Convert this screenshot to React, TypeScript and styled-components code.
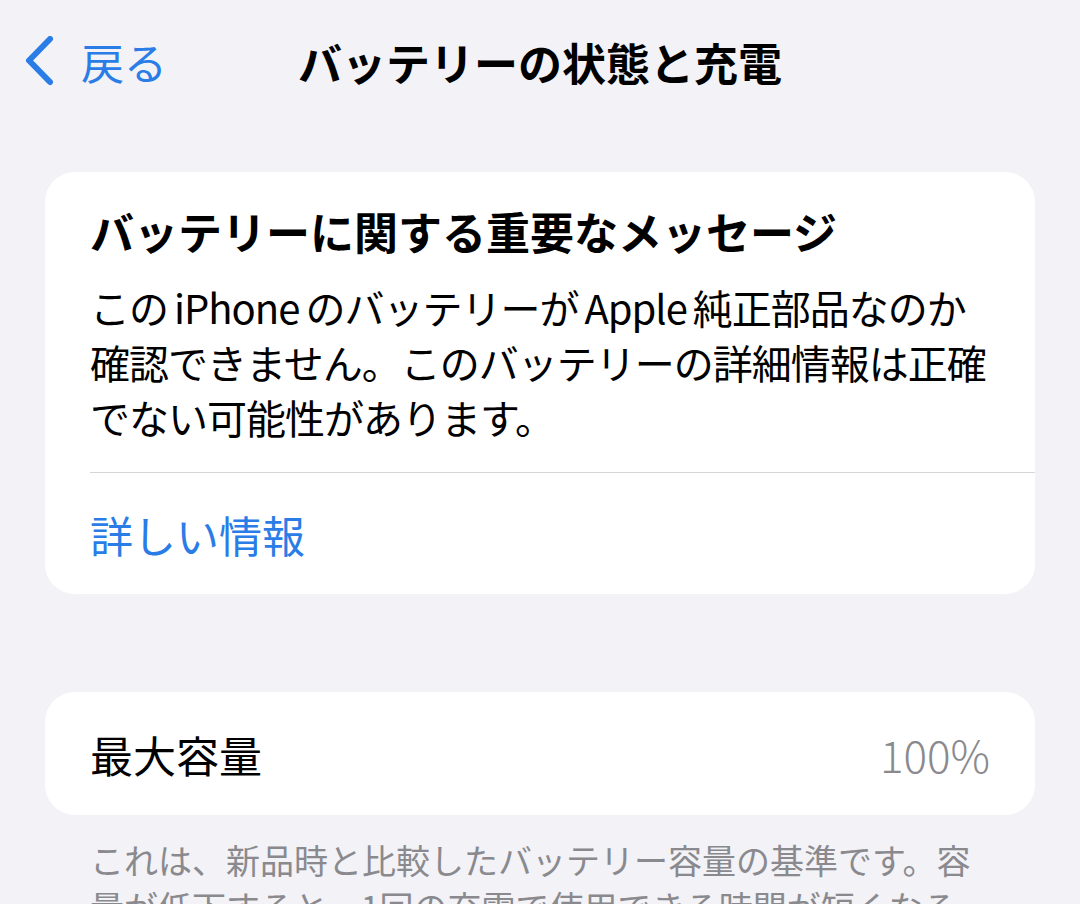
import styled, { createGlobalStyle } from "styled-components";

const GlobalStyle = createGlobalStyle`
  html, body {
    margin: 0;
    padding: 0;
    height: 904px;
    overflow: hidden;
    background: #f2f2f7;
  }

  body {
    font-family: "Noto Sans CJK JP", "Noto Sans", sans-serif;
    color: #000;
    -webkit-font-smoothing: antialiased;
  }
`;

const BLUE = "#2a7ce6";
const GRAY = "#8a8a8e";

const BackIcon = () => (
  <svg width="30" height="50" viewBox="0 0 30 50" fill="none">
    <path
      d="M25 3 L4 24.5 L25 46"
      stroke={BLUE}
      strokeWidth="6"
      strokeLinecap="round"
      strokeLinejoin="round"
    />
  </svg>
);

const App = () => {
  return (
    <>
      <GlobalStyle />
      <StyledPage>
        <StyledNavBar>
          <StyledBack>
            <BackIcon />
            <span>戻る</span>
          </StyledBack>
          <StyledTitle>バッテリーの状態と充電</StyledTitle>
          <span />
        </StyledNavBar>

        <StyledCard>
          <StyledMessage>
            <StyledHeading>バッテリーに関する重要なメッセージ</StyledHeading>
            <StyledBody>
              この<StyledLatin>iPhone</StyledLatin>のバッテリーが
              <StyledLatin>Apple</StyledLatin>純正部品なのか
              <br />
              確認できません。このバッテリーの詳細情報は正確
              <br />
              でない可能性があります。
            </StyledBody>
          </StyledMessage>
          <StyledLinkRow>詳しい情報</StyledLinkRow>
        </StyledCard>

        <StyledCard $gap={98}>
          <StyledValueRow>
            <span>最大容量</span>
            <StyledValue>100%</StyledValue>
          </StyledValueRow>
        </StyledCard>

        <StyledFooter>
          これは、新品時と比較したバッテリー容量の基準です。容量が低下すると、1回の充電で使用できる時間が短くなることがあります。
        </StyledFooter>
      </StyledPage>
    </>
  );
};

export default App;

const StyledPage = styled.div`
  display: flex;
  flex-direction: column;
  width: 1080px;
`;

const StyledNavBar = styled.header`
  display: grid;
  grid-template-columns: 1fr auto 1fr;
  align-items: center;
  height: 124px;
  padding: 0 25px;
`;

const StyledBack = styled.div`
  display: flex;
  align-items: center;
  gap: 26px;
  color: ${BLUE};
  font-size: 43px;
  line-height: 50px;
  margin-top: -2px;
`;

const StyledTitle = styled.h1`
  margin: 0;
  font-size: 44px;
  font-weight: 700;
  line-height: 52px;
`;

const StyledCard = styled.section<{ $gap?: number }>`
  margin: ${({ $gap }) => $gap ?? 48}px 45px 0;
  background: #fff;
  border-radius: 30px;
  overflow: hidden;
`;

const StyledMessage = styled.div`
  display: flex;
  flex-direction: column;
  gap: 22px;
  margin-left: 45px;
  padding: 32px 45px 27px 0;
  border-bottom: 1px solid #d6d6da;
`;

const StyledHeading = styled.h2`
  margin: 0;
  font-size: 44px;
  font-weight: 700;
  line-height: 54px;
`;

const StyledBody = styled.p`
  margin: 0;
  font-size: 40px;
  line-height: 55px;
  white-space: nowrap;
  letter-spacing: -1px;
`;

const StyledLatin = styled.span`
  margin: 0 6px;
`;

const StyledLinkRow = styled.div`
  display: flex;
  align-items: center;
  height: 121px;
  padding: 0 45px;
  color: ${BLUE};
  font-size: 43px;
`;

const StyledValueRow = styled.div`
  display: flex;
  align-items: center;
  justify-content: space-between;
  height: 123px;
  padding: 0 45px;
  font-size: 43px;
`;

const StyledValue = styled.span`
  color: ${GRAY};
  font-size: 44px;
  font-weight: 300;
`;

const StyledFooter = styled.p`
  margin: 21px 90px 0;
  font-size: 34px;
  line-height: 47px;
  color: ${GRAY};
`;
